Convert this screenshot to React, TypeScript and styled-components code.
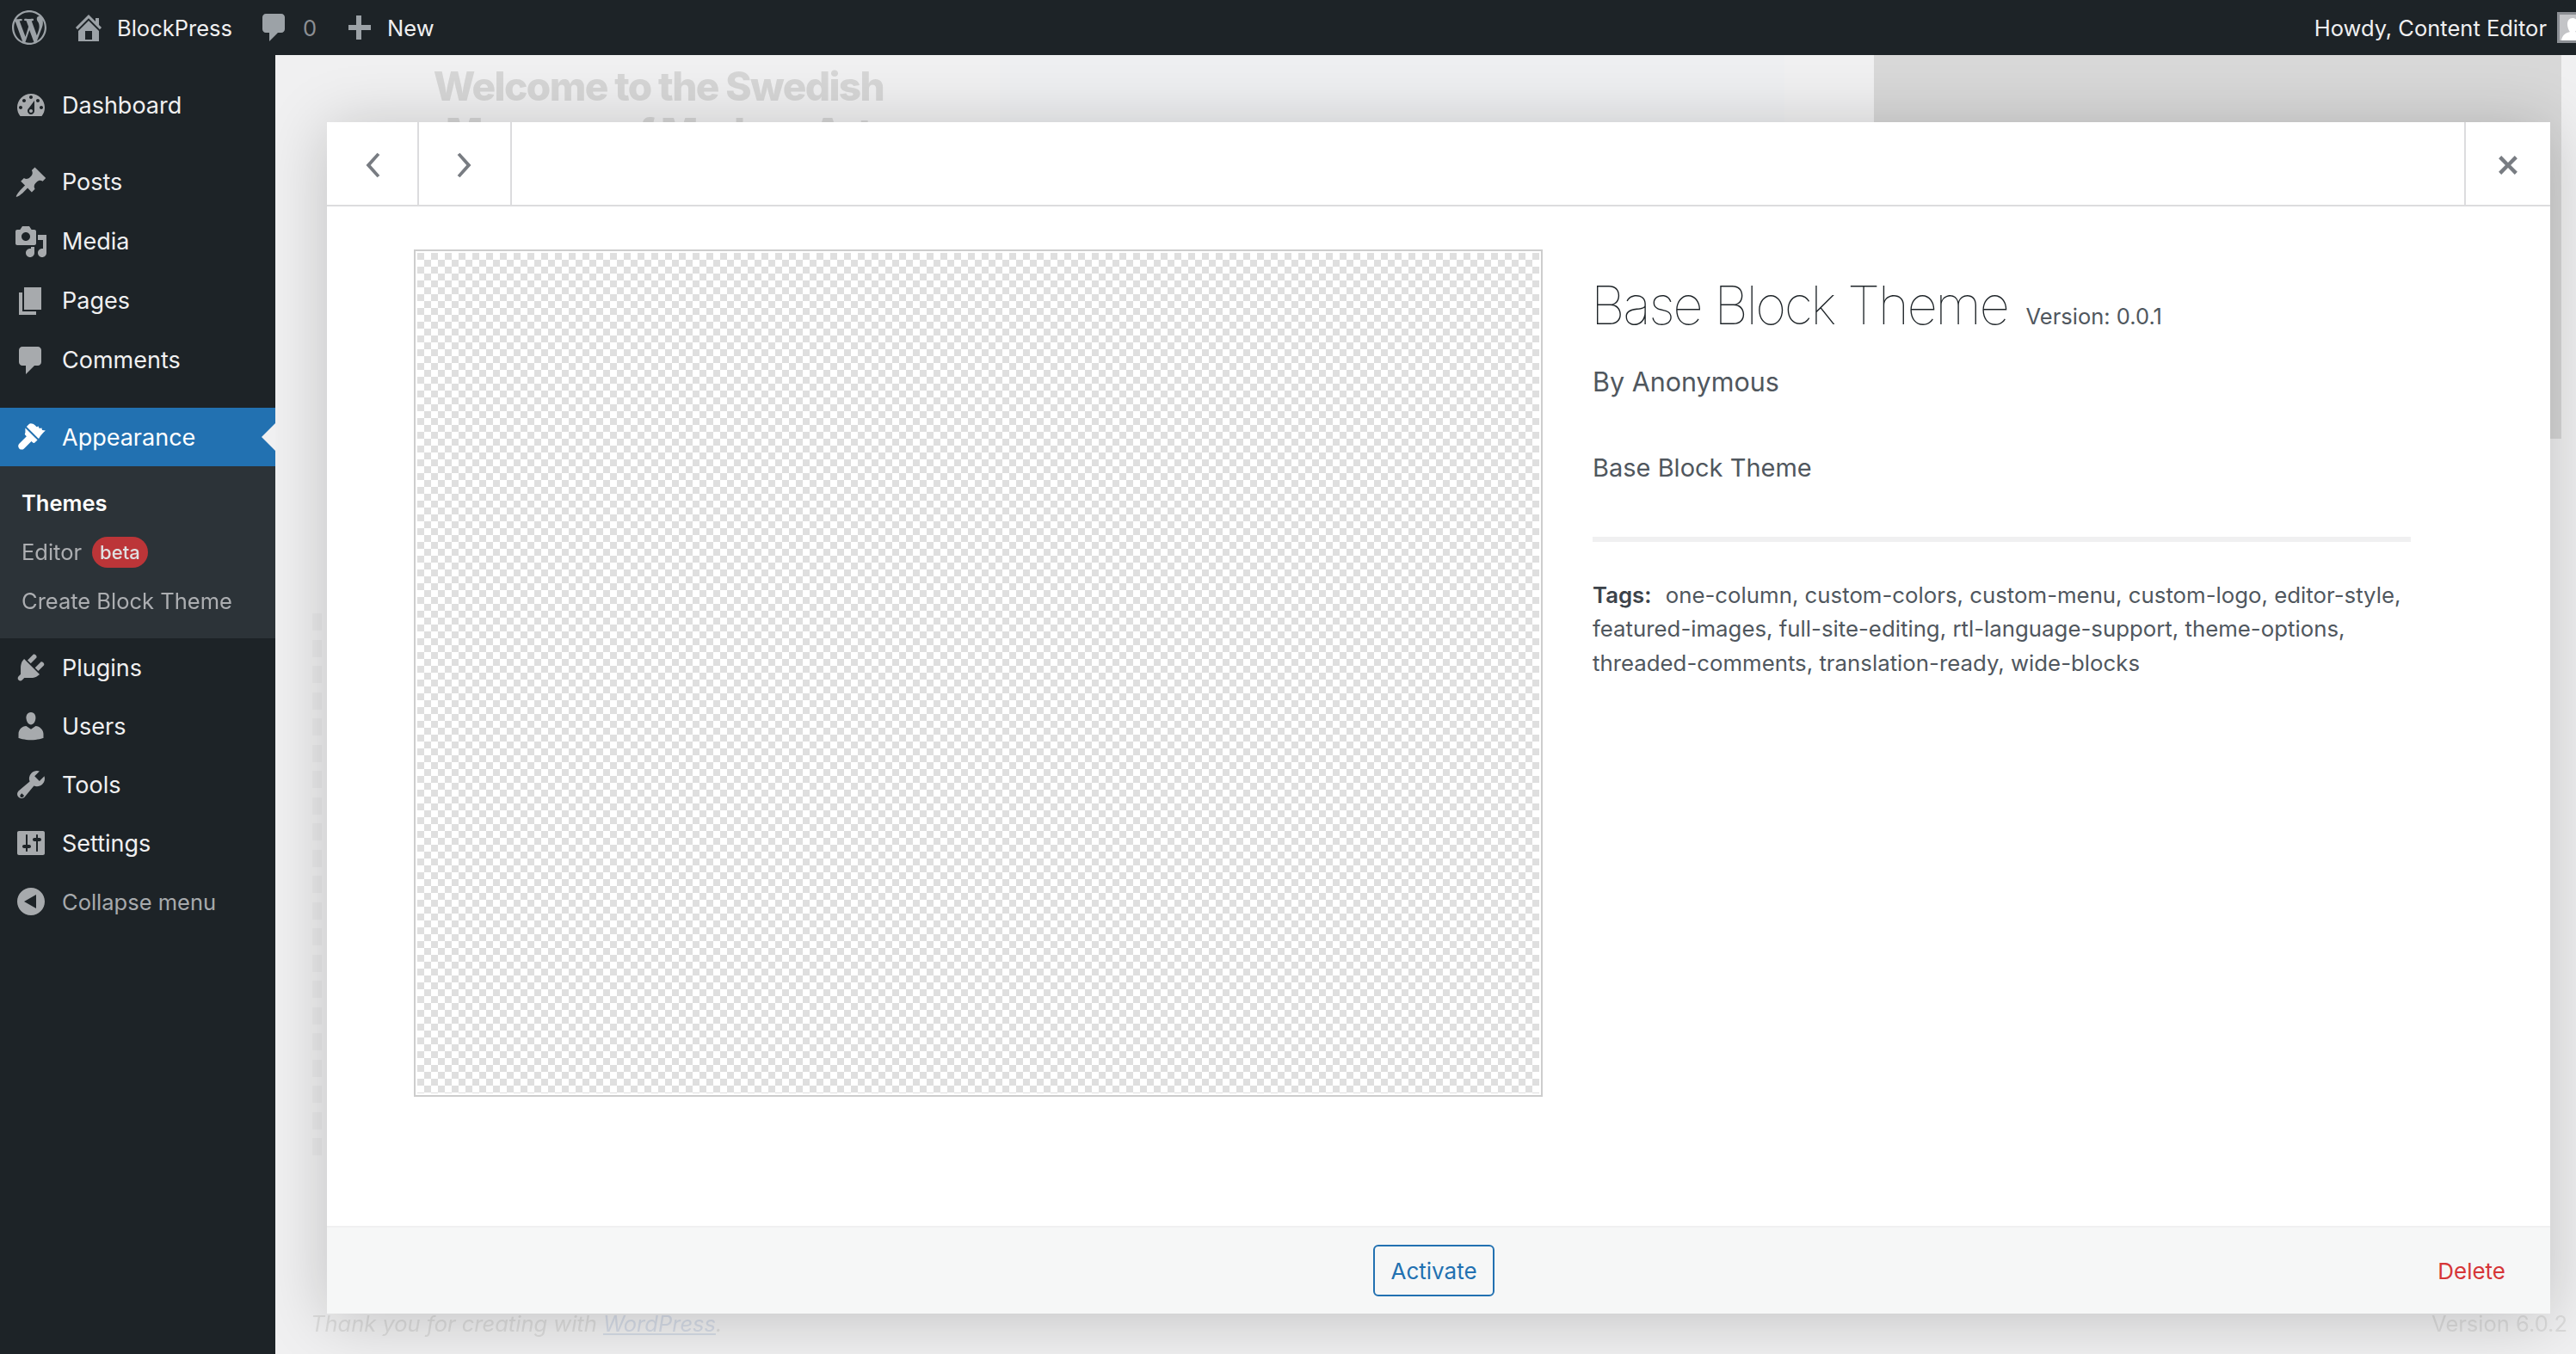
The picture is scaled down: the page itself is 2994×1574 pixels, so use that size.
import * as React from 'react';
import styled, { createGlobalStyle } from 'styled-components';

const GlobalStyle = createGlobalStyle`
html, body {
  margin: 0;
  padding: 0;
  width: 2994px;
  height: 1574px;
  overflow: hidden;
  background: #f0f0f1;
  font-family: Inter, "Liberation Sans", sans-serif;
}
* { box-sizing: border-box; }
`;

const ICONS: { [name: string]: string } = {
    wordpress: 'M20 10c0-5.510-4.490-10-10-10C4.480 0 0 4.490 0 10c0 5.520 4.480 10 10 10 5.510 0 10-4.480 10-10zM7.780 15.370L4.370 6.220c.55-.02 1.170-.08 1.170-.08.5-.06.44-1.130-.06-1.110 0 0-1.450.11-2.370.11-.18 0-.37 0-.58-.01C4.120 2.690 6.900 1.070 10 1.070c2.310 0 4.410.87 5.990 2.350-.67-.11-1.630.39-1.630 1.560 0 .73.44 1.340.9 2.080.36.630.56 1.410.56 2.510 0 1.490-1.400 5-1.400 5l-3.030-8.350c.54-.02.82-.17.82-.17.5-.05.44-1.250-.06-1.220 0 0-1.440.12-2.380.12-.87 0-2.330-.12-2.330-.12-.5-.03-.56 1.200-.06 1.220l.92.08 1.260 3.410zM17.410 10c.24-.64.740-1.870.43-4.250.7 1.290 1.050 2.710 1.050 4.250 0 3.290-1.730 6.240-4.400 7.780.97-2.590 1.940-5.210 2.920-7.780zM6.100 18.090C3.120 16.650 1.110 13.530 1.110 10c0-1.300.23-2.480.72-3.590C3.250 10.300 4.670 14.200 6.100 18.090zm4.030-6.630l2.580 6.980c-.86.29-1.760.45-2.710.45-.79 0-1.570-.11-2.290-.33.81-2.380 1.620-4.740 2.420-7.100z',
    home: 'M16 8.500l1.530 1.530-1.060 1.060L10 4.620l-6.470 6.470-1.060-1.060L10 2.500l4 4v-2h2v4zm-6-2.460l6 5.990V18H4v-5.970zM12 17v-5H8v5h4z',
    comment: 'M5 2h9c1.100 0 2 .9 2 2v7c0 1.100-.9 2-2 2h-2l-5 5v-5H5c-1.100 0-2-.9-2-2V4c0-1.100.9-2 2-2z',
    plus: 'M17 8.500v3h-5.500V17h-3v-5.500H4v-3h4.500V3h3v5.500z',
    dashboard: 'M3.760 16h12.480c1.100-1.370 1.760-3.110 1.760-5 0-4.420-3.580-8-8-8s-8 3.580-8 8c0 1.890.66 3.630 1.760 5zM10 4c.55 0 1 .45 1 1s-.45 1-1 1-1-.45-1-1 .45-1 1-1zM6 6c.55 0 1 .45 1 1s-.45 1-1 1-1-.45-1-1 .45-1 1-1zm8 0c.55 0 1 .45 1 1s-.45 1-1 1-1-.45-1-1 .45-1 1-1zm-5.370 5.550L12 7v6c0 1.100-.9 2-2 2s-2-.9-2-2c0-.57.24-1.080.63-1.450zM4 10c.55 0 1 .45 1 1s-.45 1-1 1-1-.45-1-1 .45-1 1-1zm12 0c.55 0 1 .45 1 1s-.45 1-1 1-1-.45-1-1 .45-1 1-1zm-5 3c0-.55-.45-1-1-1s-1 .45-1 1 .45 1 1 1 1-.45 1-1z',
    post: 'M10.440 3.020l1.820-1.820 6.360 6.350-1.830 1.820c-1.050-.68-2.480-.57-3.410.36l-.75.75c-.92.93-1.040 2.350-.35 3.410l-1.830 1.820-2.410-2.410-2.800 2.790c-.42.42-3.380 2.710-3.800 2.290s1.860-3.390 2.280-3.810l2.790-2.790L4.100 9.360l1.830-1.820c1.050.69 2.480.57 3.400-.36l.75-.75c.93-.92 1.050-2.350.36-3.410z',
    media: 'M13 11V4c0-.55-.45-1-1-1h-1.670L9 1H5L3.670 3H2c-.55 0-1 .45-1 1v7c0 .55.45 1 1 1h10c.55 0 1-.45 1-1zM7 4.500c1.380 0 2.500 1.120 2.500 2.500S8.380 9.500 7 9.500 4.500 8.380 4.500 7 5.620 4.500 7 4.500zM14 6h5v10.500c0 1.380-1.120 2.500-2.500 2.500S14 17.880 14 16.500s1.120-2.500 2.500-2.500c.17 0 .34.020.5.050V9h-3V6zm-4 8.050V13h2v3.500c0 1.380-1.120 2.500-2.500 2.500S7 17.880 7 16.500 8.120 14 9.500 14c.17 0 .34.020.5.050z',
    page: 'M6 15V2h10v13H6zm-1 1h8v2H3V5h2v11z',
    appearance: 'M14.480 11.060L7.410 3.990l1.500-1.500c.5-.56 2.300-.47 3.540.780l.83.83 1.070-.36.5 1.200 1.350-.25.3 1.300 1.950.3c-1.240.9-2.800 2.800-3.970 4.770zM6.700 4.700l7.070 7.070-1.410 1.410c-.39.39-1.020.39-1.410 0l-.71-.71-4.240 4.240c-.39.39-.9.590-1.410.590s-1.020-.2-1.410-.59c-.78-.78-.78-2.050 0-2.830l4.240-4.240-.71-.71c-.39-.39-.39-1.020 0-1.410z',
    plugins: 'M13.110 4.360L9.870 7.600 8 5.730l3.240-3.240c.35-.34 1.050-.2 1.560.32.520.510.660 1.210.310 1.550zm-8 1.770l.91-1.120 9.010 9.010-1.190.84c-.71.710-2.630 1.160-3.820 1.160H6.140L4.900 17.260c-.59.590-1.540.59-2.120 0-.59-.58-.59-1.530 0-2.120l1.240-1.240v-3.880c0-1.130.4-3.070 1.090-3.890zm7.260 3.970l3.240-3.240c.34-.35 1.040-.21 1.550.31.520.510.66 1.210.31 1.550l-3.240 3.250z',
    users: 'M10 9.250c-2.270 0-2.730-3.440-2.730-3.440C7 4.020 7.820 2 9.970 2c2.160 0 2.980 2.020 2.710 3.810 0 0-.41 3.440-2.680 3.440zm0 2.570L12.720 10c2.390 0 4.520 2.330 4.520 4.530v2.490s-3.650 1.130-7.240 1.130c-3.650 0-7.240-1.130-7.240-1.130v-2.490c0-2.250 1.940-4.480 4.470-4.480z',
    tools: 'M16.680 9.770c-1.340 1.340-3.300 1.670-4.950.99l-5.410 6.520c-.99.99-2.590.99-3.570 0-.99-.98-.99-2.580 0-3.570l6.520-5.420c-.68-1.650-.35-3.610.99-4.950 1.280-1.280 3.120-1.620 4.720-1.060l-2.890 2.890 2.820 2.820 2.860-2.870c.53 1.580.18 3.390-1.090 4.650zM4.660 15.130l-.7.710c-.38.38-.38 1 0 1.380.38.39 1 .39 1.380 0l.71-.7z',
    settings: 'M18 16V4c0-.55-.45-1-1-1H3c-.55 0-1 .45-1 1v12c0 .55.45 1 1 1h14c.55 0 1-.45 1-1zM8 11h1c.55 0 1 .45 1 1s-.45 1-1 1H8v1.500c0 .28-.22.5-.5.5s-.5-.22-.5-.5V13H6c-.55 0-1-.45-1-1s.45-1 1-1h1V5.500c0-.28.22-.5.5-.5s.5.22.5.5V11zm5-2h-1c-.55 0-1-.45-1-1s.45-1 1-1h1V5.500c0-.28.22-.5.5-.5s.5.22.5.5V7h1c.55 0 1 .45 1 1s-.45 1-1 1h-1v5.500c0 .28-.22.5-.5.5s-.5-.22-.5-.5V9z',
    collapse: 'M18 10c0-4.420-3.580-8-8-8s-8 3.580-8 8 3.580 8 8 8 8-3.580 8-8zm-5 4l-7-4 7-4v8z',
    close: 'M14.950 6.460L11.410 10l3.540 3.540-1.410 1.410L10 11.420l-3.530 3.530-1.420-1.420L8.580 10 5.050 6.470l1.420-1.420L10 8.580l3.540-3.530z',
    prev: 'M12.500 3.500l1.300 1L9 10l4.800 5.500-1.300 1L6.600 10z',
    next: 'M7.500 3.500l-1.300 1L11 10l-4.800 5.500 1.300 1L13.400 10z',
};

const Icon = ({ name, size = 40, color }: { name: string; size?: number; color?: string }) => (
    <svg width={size} height={size} viewBox="0 0 20 20" fill={color || 'currentColor'} style={{ flex: 'none' }}>
        <path fillRule="evenodd" d={ICONS[name]} />
    </svg>
);

const Page = styled.div`
  position: relative;
  width: 2994px;
  height: 1574px;
  overflow: hidden;
  display: flex;
  flex-direction: column;
`;

const AdminBar = styled.header`
  position: relative;
  z-index: 3;
  flex: none;
  height: 64px;
  background: #1d2327;
  color: #f0f0f1;
  display: flex;
  align-items: center;
  gap: 29px;
  padding-left: 14px;
  font-size: 25.5px;
  white-space: nowrap;
`;

const BarItem = styled.div`
  display: flex;
  align-items: center;
  gap: 13px;
  color: #f0f0f1;
  svg { color: #9ca2a7; }
`;

const BarCount = styled.span`
  color: #8c8f94;
`;

const BarUser = styled.div`
  margin-left: auto;
  margin-right: -14px;
  display: flex;
  align-items: center;
  gap: 12px;
`;

const Avatar = styled.div`
  width: 36px;
  height: 36px;
  border: 3px solid #8c8f94;
  background: #c3c4c7;
  overflow: hidden;
  svg { display: block; }
`;

const Columns = styled.div`
  flex: 1;
  display: flex;
  min-height: 0;
`;

const Sidebar = styled.nav`
  position: relative;
  z-index: 2;
  flex: none;
  width: 320px;
  background: #1d2327;
  padding-top: 24px;
`;

const MenuRow = styled.div<{ $tall?: boolean; $active?: boolean; $muted?: boolean }>`
  position: relative;
  height: ${p => (p.$tall ? 69 : 68)}px;
  display: flex;
  align-items: center;
  gap: 16px;
  padding-left: 16px;
  font-size: ${p => (p.$muted ? 25.5 : 27)}px;
  color: ${p => (p.$active ? '#fff' : p.$muted ? '#a7aaad' : '#f0f0f1')};
  background: ${p => (p.$active ? '#2271b1' : 'transparent')};
  svg { color: ${p => (p.$active ? '#fff' : '#a7aaad')}; }
`;

const MenuGap = styled.div<{ $h: number }>`
  height: ${p => p.$h}px;
`;

const ActiveArrow = styled.span`
  position: absolute;
  right: 0;
  top: 18px;
  width: 0;
  height: 0;
  border: 16px solid transparent;
  border-right-color: #f0f0f1;
  border-left-width: 0;
`;

const SubMenu = styled.div`
  background: #2c3338;
  padding: 14px 0 15px;
`;

const SubItem = styled.div<{ $current?: boolean }>`
  height: 57px;
  display: flex;
  align-items: center;
  gap: 12px;
  padding-left: 25px;
  font-size: 25.5px;
  font-weight: ${p => (p.$current ? 600 : 400)};
  color: ${p => (p.$current ? '#fff' : '#c3c4c7')};
  opacity: ${p => (p.$current ? 1 : 0.85)};
`;

const Beta = styled.span`
  height: 36px;
  padding: 0 9px;
  border-radius: 18px;
  background: #d63638;
  color: #fff;
  font-size: 22px;
  line-height: 36px;
  font-weight: 500;
`;

const Main = styled.main`
  flex: 1;
  min-width: 0;
  display: flex;
  flex-direction: column;
  filter: blur(0.5px);
`;

const Hero = styled.section`
  flex: none;
  height: 446px;
  display: flex;
  align-items: flex-start;
`;

const HeroText = styled.h1`
  flex: none;
  width: 842px;
  margin: 0;
  padding: 9px 130px 0 179px;
  font-size: 46px;
  font-weight: 800;
  line-height: 54px;
  letter-spacing: -1.6px;
  text-align: center;
  color: #d6d6d6;
`;

const HeroBand = styled.div`
  flex: none;
  width: 912px;
  height: 78px;
  background: #eeeff1;
`;

const HeroPicture = styled.div`
  flex: none;
  width: 799px;
  margin-left: 104px;
  height: 446px;
  background: #d8d8d8;
`;

const FaintList = styled.div`
  flex: none;
  margin: 203px 0 0 43px;
  display: flex;
  flex-direction: column;
  gap: 10.5px;
`;

const FaintBar = styled.div`
  width: 11px;
  height: 20px;
  background: rgba(0, 0, 0, 0.025);
`;

const PageFooter = styled.footer`
  margin-top: auto;
  height: 71px;
  padding: 0 10px 0 41px;
  display: flex;
  align-items: center;
  justify-content: space-between;
  font-size: 25.5px;
  color: #dcdcdc;
  i a { color: #d5dbe6; text-decoration: underline; }
`;

const Overlay = styled.section`
  position: absolute;
  z-index: 1;
  left: 380px;
  top: 142px;
  width: 2584px;
  height: 1385px;
  background: #fff;
  display: flex;
  flex-direction: column;
  box-shadow: 0 6px 70px rgba(0, 0, 0, 0.2);
`;

const OverlayHead = styled.div`
  flex: none;
  height: 98px;
  display: flex;
  border-bottom: 2px solid #dcdcde;
`;

const HeadButton = styled.div<{ $right?: boolean; $w: number }>`
  flex: none;
  width: ${p => p.$w}px;
  padding-top: 3px;
  display: flex;
  align-items: center;
  justify-content: center;
  color: #787c82;
  ${p => (p.$right ? 'margin-left: auto; border-left: 2px solid #dcdcde;' : 'border-right: 2px solid #dcdcde;')}
`;

const OverlayBody = styled.div`
  flex: 1;
  display: flex;
  align-items: flex-start;
  gap: 58px;
  padding: 50px 0 0 101px;
`;

const Screenshot = styled.div`
  flex: none;
  width: 1312px;
  height: 985px;
  border: 2px solid #cdcdcd;
  padding: 2px;
  background: repeating-conic-gradient(#fff 0 25%, #dfdfdf 0 50%) content-box;
  background-size: 16px 16px;
  background-origin: content-box;
`;

const Info = styled.div`
  width: 951px;
  padding-top: 29px;
  color: #50575e;
`;

const ThemeName = styled.h2`
  margin: 0 0 0 -2px;
  height: 72px;
  font-size: 62px;
  line-height: 72px;
  font-weight: 100;
  letter-spacing: -2.5px;
  color: #1d2327;
  white-space: nowrap;
`;

const ThemeVersion = styled.span`
  margin-left: 21px;
  font-size: 25.5px;
  font-weight: 400;
  letter-spacing: 0;
  color: #50575e;
`;

const Author = styled.p`
  margin: 33px 0 0;
  font-size: 30.5px;
  line-height: 40px;
`;

const Description = styled.p`
  margin: 60px 0 0;
  font-size: 29px;
  line-height: 40px;
`;

const Rule = styled.div`
  margin-top: 60px;
  height: 6px;
  background: #f0f0f1;
`;

const Tags = styled.p`
  margin: 42px 0 0;
  font-size: 25.8px;
  line-height: 39.3px;
  b { font-weight: 600; color: #3c434a; margin-right: 9px; }
`;

const OverlayFoot = styled.div`
  flex: none;
  height: 102px;
  border-top: 2px solid #f0f0f1;
  background: #f6f7f7;
  display: flex;
  align-items: center;
  justify-content: space-between;
  padding: 0 52px 0 1216px;
`;

const ActivateButton = styled.button`
  width: 141px;
  height: 60px;
  padding: 0;
  border: 2px solid #2271b1;
  border-radius: 6px;
  background: #f6f7f7;
  color: #2271b1;
  font-family: inherit;
  font-size: 26px;
`;

const DeleteLink = styled.a`
  color: #d63638;
  font-size: 26px;
`;

const topItems = [
    { icon: 'post', label: 'Posts' },
    { icon: 'media', label: 'Media' },
    { icon: 'page', label: 'Pages' },
    { icon: 'comment', label: 'Comments' },
];

const lowerItems = [
    { icon: 'plugins', label: 'Plugins' },
    { icon: 'users', label: 'Users' },
    { icon: 'tools', label: 'Tools' },
    { icon: 'settings', label: 'Settings' },
];

const faintBars = Array.from({ length: 21 }, (_, i) => i);

const App = () => (
    <Page>
        <GlobalStyle />
        <AdminBar>
            <BarItem><Icon name="wordpress" /></BarItem>
            <BarItem><Icon name="home" />BlockPress</BarItem>
            <BarItem><Icon name="comment" /><BarCount>0</BarCount></BarItem>
            <BarItem><Icon name="plus" />New</BarItem>
            <BarUser>
                Howdy, Content Editor
                <Avatar>
                    <svg width="30" height="30" viewBox="0 0 30 30" fill="#fff">
                        <path d="M15 4c4 0 6 3 6 7s-2 8-3 9c4 1 9 3 10 10H2c1-7 6-9 10-10-1-1-3-5-3-9s2-7 6-7z" />
                    </svg>
                </Avatar>
            </BarUser>
        </AdminBar>
        <Columns>
            <Sidebar>
                <MenuRow $tall><Icon name="dashboard" />Dashboard</MenuRow>
                <MenuGap $h={20} />
                {topItems.map(item => (
                    <MenuRow $tall key={item.label}><Icon name={item.icon} />{item.label}</MenuRow>
                ))}
                <MenuGap $h={21} />
                <MenuRow $active><Icon name="appearance" />Appearance<ActiveArrow /></MenuRow>
                <SubMenu>
                    <SubItem $current>Themes</SubItem>
                    <SubItem>Editor <Beta>beta</Beta></SubItem>
                    <SubItem>Create Block Theme</SubItem>
                </SubMenu>
                {lowerItems.map(item => (
                    <MenuRow key={item.label}><Icon name={item.icon} />{item.label}</MenuRow>
                ))}
                <MenuRow $muted><Icon name="collapse" />Collapse menu</MenuRow>
            </Sidebar>
            <Main>
                <Hero>
                    <HeroText>Welcome to the Swedish Museum of Modern Art</HeroText>
                    <HeroBand />
                    <HeroPicture />
                </Hero>
                <FaintList>
                    {faintBars.map(i => <FaintBar key={i} />)}
                </FaintList>
                <PageFooter>
                    <i>Thank you for creating with <a>WordPress</a>.</i>
                    <span>Version 6.0.2</span>
                </PageFooter>
            </Main>
        </Columns>
        <Overlay>
            <OverlayHead>
                <HeadButton $w={107}><Icon name="prev" size={44} /></HeadButton>
                <HeadButton $w={108}><Icon name="next" size={44} /></HeadButton>
                <HeadButton $right $w={100}><Icon name="close" size={44} /></HeadButton>
            </OverlayHead>
            <OverlayBody>
                <Screenshot />
                <Info>
                    <ThemeName>Base Block Theme<ThemeVersion>Version: 0.0.1</ThemeVersion></ThemeName>
                    <Author>By Anonymous</Author>
                    <Description>Base Block Theme</Description>
                    <Rule />
                    <Tags>
                        <b>Tags:</b> one-column, custom-colors, custom-menu, custom-logo, editor-style, featured-images, full-site-editing, rtl-language-support, theme-options, threaded-comments, translation-ready, wide-blocks
                    </Tags>
                </Info>
            </OverlayBody>
            <OverlayFoot>
                <ActivateButton>Activate</ActivateButton>
                <DeleteLink>Delete</DeleteLink>
            </OverlayFoot>
        </Overlay>
    </Page>
);

export default App;
